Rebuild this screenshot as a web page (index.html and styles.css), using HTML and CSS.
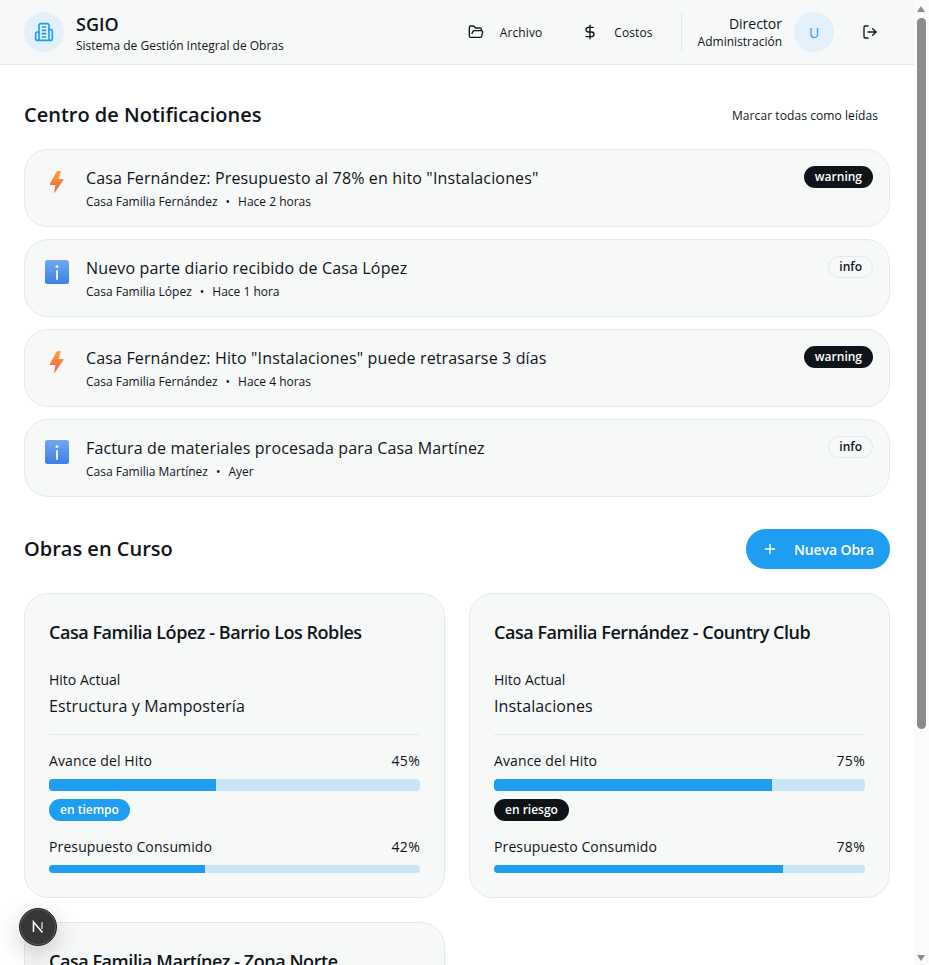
FILE: index.html
```html
<!DOCTYPE html>
<html lang="es">
<head>
<meta charset="UTF-8">
<title>SGIO</title>
<link rel="stylesheet" href="styles.css">
</head>
<body>
	<header class="topbar">
		<div class="brand">
			<div class="brand-icon">
				<svg width="20" height="20" viewBox="0 0 24 24" fill="none" stroke="#1e9df1" stroke-width="2" stroke-linecap="round" stroke-linejoin="round">
					<path d="M6 22V4a2 2 0 0 1 2-2h8a2 2 0 0 1 2 2v18Z"/>
					<path d="M6 12H4a2 2 0 0 0-2 2v6a2 2 0 0 0 2 2h2"/>
					<path d="M18 9h2a2 2 0 0 1 2 2v9a2 2 0 0 1-2 2h-2"/>
					<path d="M10 6h4"/><path d="M10 10h4"/><path d="M10 14h4"/><path d="M10 18h4"/>
				</svg>
			</div>
			<div>
				<div class="brand-name">SGIO</div>
				<div class="brand-sub">Sistema de Gestión Integral de Obras</div>
			</div>
		</div>
		<nav class="nav">
			<a class="nav-item">
				<svg width="16" height="16" viewBox="0 0 24 24" fill="none" stroke="#0f1419" stroke-width="2" stroke-linecap="round" stroke-linejoin="round">
					<path d="m6 14 1.5-2.9A2 2 0 0 1 9.24 10H20a2 2 0 0 1 1.94 2.5l-1.54 6a2 2 0 0 1-1.95 1.5H4a2 2 0 0 1-2-2V5a2 2 0 0 1 2-2h3.9a2 2 0 0 1 1.69.9l.81 1.2a2 2 0 0 0 1.67.9H18a2 2 0 0 1 2 2v2"/>
				</svg>
				Archivo
			</a>
			<a class="nav-item">
				<svg width="16" height="16" viewBox="0 0 24 24" fill="none" stroke="#0f1419" stroke-width="2" stroke-linecap="round" stroke-linejoin="round">
					<line x1="12" x2="12" y1="2" y2="22"/>
					<path d="M17 5H9.5a3.5 3.5 0 0 0 0 7h5a3.5 3.5 0 0 1 0 7H6"/>
				</svg>
				Costos
			</a>
		</nav>
		<div class="user">
			<div class="user-text">
				<div class="user-role">Director</div>
				<div class="user-dept">Administración</div>
			</div>
			<div class="avatar">U</div>
			<svg class="logout" width="16" height="16" viewBox="0 0 24 24" fill="none" stroke="#0f1419" stroke-width="2" stroke-linecap="round" stroke-linejoin="round">
				<path d="M9 21H5a2 2 0 0 1-2-2V5a2 2 0 0 1 2-2h4"/>
				<polyline points="16 17 21 12 16 7"/>
				<line x1="21" x2="9" y1="12" y2="12"/>
			</svg>
		</div>
	</header>

	<main class="content">
		<div class="section-head">
			<h2>Centro de Notificaciones</h2>
			<a class="mark-read">Marcar todas como leídas</a>
		</div>

		<div class="notes">
			<div class="note">
				<span class="note-icon">
					<svg width="24" height="24" viewBox="0 0 24 24"><defs><linearGradient id="boltA" x1="0" y1="0" x2="0" y2="1"><stop offset="0" stop-color="#fda53a"/><stop offset="1" stop-color="#ef5a45"/></linearGradient></defs><path d="M12 1 5 13.5V15h5.5L9 23.5 18.5 10V9h-5L16 1Z" fill="url(#boltA)"/></svg>
				</span>
				<div class="note-body">
					<div class="note-title">Casa Fernández: Presupuesto al 78% en hito "Instalaciones"</div>
					<div class="note-meta"><span>Casa Familia Fernández</span><span>•</span><span>Hace 2 horas</span></div>
				</div>
				<span class="chip chip-dark">warning</span>
			</div>
			<div class="note">
				<span class="note-icon">
					<svg width="24" height="24" viewBox="0 0 24 24"><defs><linearGradient id="infoA" x1="0" y1="0" x2="0" y2="1"><stop offset="0" stop-color="#6fa8f2"/><stop offset="1" stop-color="#3f7fe4"/></linearGradient></defs><rect width="24" height="24" rx="2.5" fill="url(#infoA)"/><circle cx="12" cy="6.5" r="1.6" fill="#eaf2fd"/><rect x="11" y="10" width="2" height="10" rx="1" fill="#eaf2fd"/></svg>
				</span>
				<div class="note-body">
					<div class="note-title">Nuevo parte diario recibido de Casa López</div>
					<div class="note-meta"><span>Casa Familia López</span><span>•</span><span>Hace 1 hora</span></div>
				</div>
				<span class="chip chip-outline">info</span>
			</div>
			<div class="note">
				<span class="note-icon">
					<svg width="24" height="24" viewBox="0 0 24 24"><path d="M12 1 5 13.5V15h5.5L9 23.5 18.5 10V9h-5L16 1Z" fill="url(#boltA)"/></svg>
				</span>
				<div class="note-body">
					<div class="note-title">Casa Fernández: Hito "Instalaciones" puede retrasarse 3 días</div>
					<div class="note-meta"><span>Casa Familia Fernández</span><span>•</span><span>Hace 4 horas</span></div>
				</div>
				<span class="chip chip-dark">warning</span>
			</div>
			<div class="note">
				<span class="note-icon">
					<svg width="24" height="24" viewBox="0 0 24 24"><rect width="24" height="24" rx="2.5" fill="url(#infoA)"/><circle cx="12" cy="6.5" r="1.6" fill="#eaf2fd"/><rect x="11" y="10" width="2" height="10" rx="1" fill="#eaf2fd"/></svg>
				</span>
				<div class="note-body">
					<div class="note-title">Factura de materiales procesada para Casa Martínez</div>
					<div class="note-meta"><span>Casa Familia Martínez</span><span>•</span><span>Ayer</span></div>
				</div>
				<span class="chip chip-outline">info</span>
			</div>
		</div>

		<div class="section-head works-head">
			<h2>Obras en Curso</h2>
			<a class="btn-new">
				<svg width="16" height="16" viewBox="0 0 24 24" fill="none" stroke="#fff" stroke-width="2" stroke-linecap="round"><path d="M5 12h14"/><path d="M12 5v14"/></svg>
				Nueva Obra
			</a>
		</div>

		<div class="works">
			<div class="work">
				<h3>Casa Familia López - Barrio Los Robles</h3>
				<div class="label">Hito Actual</div>
				<div class="value">Estructura y Mampostería</div>
				<hr>
				<div class="row"><span>Avance del Hito</span><span class="pct">45%</span></div>
				<div class="bar bar-big"><div class="fill" style="width: 45%"></div></div>
				<span class="chip chip-blue">en tiempo</span>
				<div class="row row-budget"><span>Presupuesto Consumido</span><span class="pct">42%</span></div>
				<div class="bar"><div class="fill" style="width: 42%"></div></div>
			</div>
			<div class="work">
				<h3>Casa Familia Fernández - Country Club</h3>
				<div class="label">Hito Actual</div>
				<div class="value">Instalaciones</div>
				<hr>
				<div class="row"><span>Avance del Hito</span><span class="pct">75%</span></div>
				<div class="bar bar-big"><div class="fill" style="width: 75%"></div></div>
				<span class="chip chip-dark">en riesgo</span>
				<div class="row row-budget"><span>Presupuesto Consumido</span><span class="pct">78%</span></div>
				<div class="bar"><div class="fill" style="width: 78%"></div></div>
			</div>
			<div class="work">
				<h3>Casa Familia Martínez - Zona Norte</h3>
				<div class="label">Hito Actual</div>
				<div class="value">Terminaciones</div>
				<hr>
				<div class="row"><span>Avance del Hito</span><span class="pct">90%</span></div>
				<div class="bar bar-big"><div class="fill" style="width: 90%"></div></div>
				<span class="chip chip-blue">en tiempo</span>
				<div class="row row-budget"><span>Presupuesto Consumido</span><span class="pct">85%</span></div>
				<div class="bar"><div class="fill" style="width: 85%"></div></div>
			</div>
		</div>
	</main>

	<div class="next-badge">
		<svg width="20" height="20" viewBox="0 0 20 20" fill="none"><path d="M5.5 15V5l9 10.5" stroke="#fff" stroke-width="1.6"/><path d="M14 5v7" stroke="#bbb" stroke-width="1.6"/></svg>
	</div>

	<!-- barra de scroll de la ventana -->
	<div class="scroll-track">
		<span class="arrow-up"></span>
		<span class="scroll-thumb"></span>
		<span class="arrow-down"></span>
	</div>
</body>
</html>
```

FILE: styles.css
```css
* {
	box-sizing: border-box;
}

body {
	margin: 0;
	padding-right: 15px;
	background-color: #fff;
	color: #0f1419;
	font-family: "Open Sans", sans-serif;
}

h2, h3 {
	margin: 0;
	font-weight: 600;
}

/* barra superior */
.topbar {
	display: flex;
	align-items: center;
	height: 65px;
	padding: 0 24px;
	background-color: #f7f8f8;
	border-bottom: 1px solid #e1eaef;
}

.brand {
	display: flex;
	align-items: center;
	gap: 12px;
	margin-right: auto;
}

.brand-icon {
	display: flex;
	align-items: center;
	justify-content: center;
	width: 40px;
	height: 40px;
	border-radius: 50%;
	background-color: #e3f0f9;
}

.brand-name {
	font-size: 18px;
	font-weight: 600;
	line-height: 28px;
}

.brand-sub {
	font-size: 12px;
	line-height: 16px;
}

.nav {
	display: flex;
	gap: 8px;
	height: 40px;
	padding-right: 12px;
	border-right: 1px solid #e1eaef;
}

.nav-item {
	display: flex;
	align-items: center;
	gap: 16px;
	padding: 0 16px;
	font-size: 12px;
	font-weight: 500;
	letter-spacing: 0.1px;
}

.user {
	display: flex;
	align-items: center;
	padding-left: 16px;
}

.user-text {
	text-align: right;
	margin-right: 12px;
}

.user-role {
	font-size: 14px;
	line-height: 20px;
}

.user-dept {
	font-size: 12px;
	line-height: 16px;
}

.avatar {
	display: flex;
	align-items: center;
	justify-content: center;
	width: 40px;
	height: 40px;
	border-radius: 50%;
	background-color: #e3f0f9;
	color: #1e9df1;
	font-size: 14px;
	font-weight: 500;
}

.logout {
	margin: 0 12px 0 28px;
}

/* contenido */
.content {
	padding: 32px 24px;
}

.section-head {
	display: flex;
	align-items: center;
	justify-content: space-between;
	height: 36px;
	margin-bottom: 16px;
}

.section-head h2 {
	font-size: 20px;
	line-height: 28px;
}

.mark-read {
	padding: 0 12px;
	font-size: 12px;
	font-weight: 500;
	letter-spacing: 0.08px;
}

.notes {
	display: flex;
	flex-direction: column;
	gap: 12px;
}

.note {
	display: flex;
	align-items: flex-start;
	height: 78px;
	padding: 16px 16px 0 20px;
	background-color: #f7f8f8;
	border: 1px solid #e1eaef;
	border-radius: 24px;
}

.note-icon {
	display: flex;
	justify-content: center;
	width: 24px;
	margin-top: 4px;
	margin-right: 17px;
}

.note-body {
	flex: 1;
}

.note-title {
	font-size: 16px;
	line-height: 24px;
	letter-spacing: 0.15px;
}

.note-meta {
	display: flex;
	gap: 8px;
	margin-top: 4px;
	font-size: 12px;
	line-height: 16px;
}

.chip {
	display: block;
	width: fit-content;
	height: 22px;
	padding: 0 10px;
	border: 1px solid transparent;
	border-radius: 11px;
	font-size: 12px;
	font-weight: 600;
	line-height: 19px;
}

.chip-dark {
	background-color: #0f1419;
	color: #fff;
}

.chip-outline {
	border-color: #e1eaef;
}

.chip-blue {
	background-color: #1e9df1;
	color: #fff;
}

.works-head {
	height: 40px;
	margin-top: 32px;
	margin-bottom: 24px;
}

.btn-new {
	display: flex;
	align-items: center;
	gap: 16px;
	height: 40px;
	padding: 0 16px;
	background-color: #1e9df1;
	border-radius: 20px;
	color: #fff;
	font-size: 14px;
	font-weight: 600;
	letter-spacing: -0.1px;
}

.works {
	display: grid;
	grid-template-columns: 1fr 1fr;
	gap: 24px;
}

.work {
	height: 305px;
	padding: 24px;
	background-color: #f7f8f8;
	border: 1px solid #e1eaef;
	border-radius: 24px;
}

.work h3 {
	margin-bottom: 24px;
	font-size: 18px;
	line-height: 28px;
	letter-spacing: -0.45px;
}

.label {
	font-size: 14px;
	line-height: 20px;
}

.value {
	margin-top: 4px;
	font-size: 16px;
	line-height: 24px;
	letter-spacing: 0.13px;
}

.work hr {
	margin: 16px 0;
	border: 0;
	border-top: 1px solid #e1eaef;
}

.row {
	display: flex;
	justify-content: space-between;
	font-size: 14px;
	font-weight: 500;
	line-height: 20px;
	letter-spacing: 0.12px;
}

.pct {
	letter-spacing: 0.3px;
}

.row-budget {
	margin-top: 16px;
}

.bar {
	height: 8px;
	margin-top: 8px;
	background-color: #cbe5f8;
	border-radius: 4px;
	overflow: hidden;
}

.bar-big {
	height: 12px;
	margin-bottom: 8px;
}

.fill {
	height: 100%;
	background-color: #1e9df1;
}

.next-badge {
	position: fixed;
	left: 19px;
	bottom: 19px;
	display: flex;
	align-items: center;
	justify-content: center;
	width: 38px;
	height: 38px;
	background-color: #363636;
	border: 1px solid #222;
	border-radius: 50%;
	box-shadow: inset 0 0 0 1px #5c5c5c, 0 8px 24px rgba(0, 0, 0, 0.2);
}

/* scroll */
.scroll-track {
	position: fixed;
	top: 0;
	right: 0;
	bottom: 0;
	width: 15px;
	background-color: #fbfbfb;
}

.scroll-thumb {
	position: absolute;
	top: 18px;
	left: 3px;
	width: 9px;
	height: 711px;
	background-color: #8b8b8b;
	border-radius: 5px;
}

.arrow-up,
.arrow-down {
	position: absolute;
	left: 3px;
	width: 0;
	height: 0;
	border-left: 4.5px solid transparent;
	border-right: 4.5px solid transparent;
}

.arrow-up {
	top: 6px;
	border-bottom: 6px solid #8b8b8b;
}

.arrow-down {
	bottom: 4px;
	border-top: 6px solid #8b8b8b;
}
```
